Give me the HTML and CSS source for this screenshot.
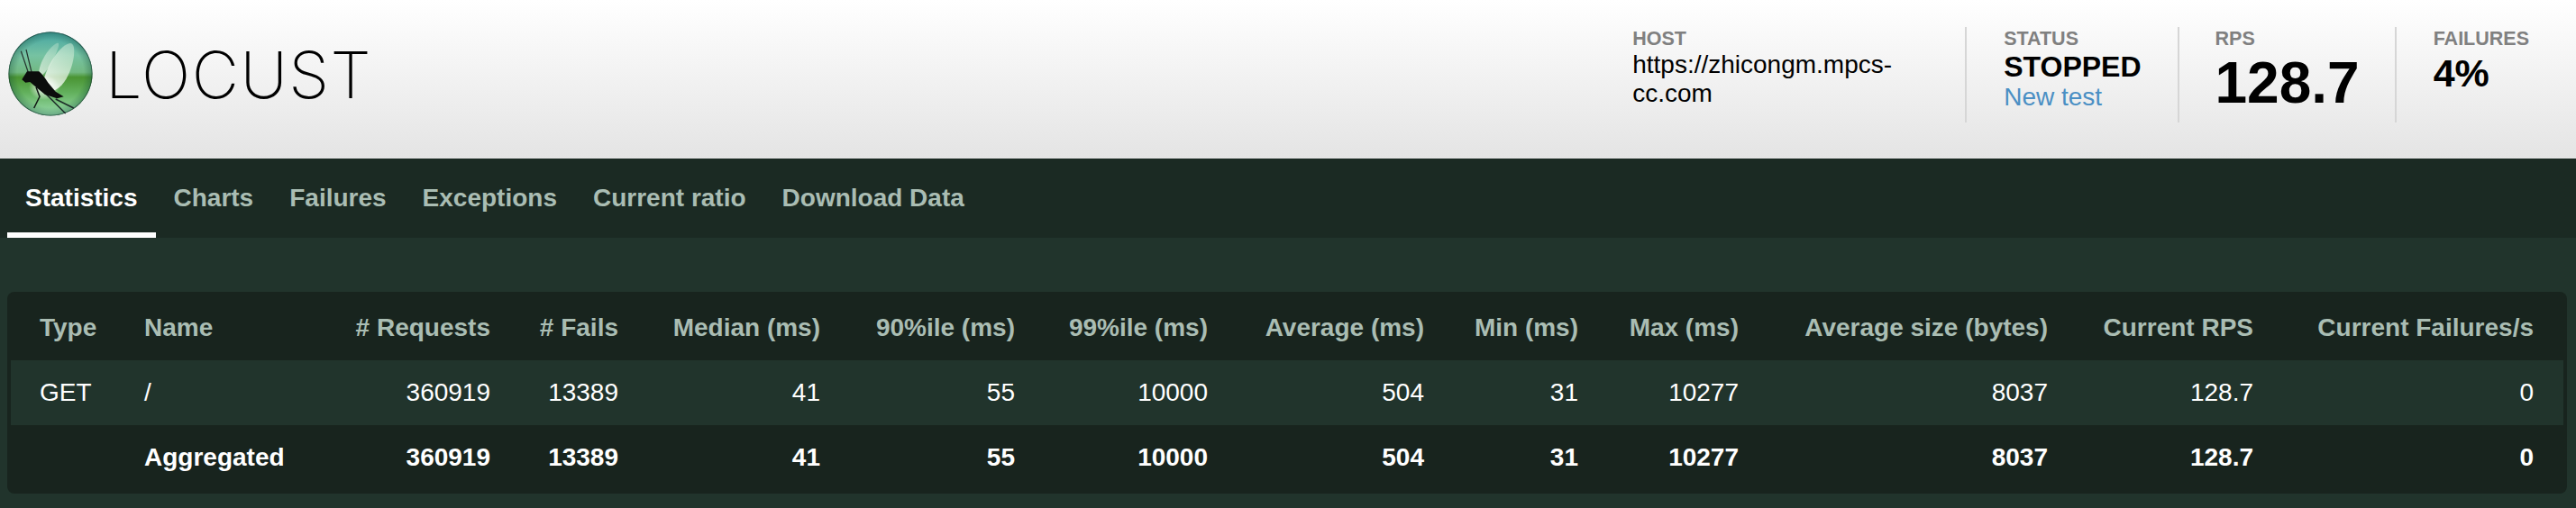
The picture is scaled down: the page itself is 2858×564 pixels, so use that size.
FILE: index.html
```html
<!DOCTYPE html>
<html>
	<head>
		<meta charset="utf-8" />
		<title>Locust</title>
		<link rel="stylesheet" href="styles.css">
	</head>
	<body>
		<div class="top">
			<div class="brand">
				<svg class="logo" viewBox="0 0 94 94" width="94" height="94">
					<defs>
						<linearGradient id="ball" x1="0" y1="0" x2="0" y2="1">
							<stop offset="0" stop-color="#45a5a3"/>
							<stop offset="0.28" stop-color="#76c2a2"/>
							<stop offset="0.48" stop-color="#72b982"/>
							<stop offset="0.54" stop-color="#4a9433"/>
							<stop offset="0.72" stop-color="#62b05c"/>
							<stop offset="1" stop-color="#9adcae"/>
						</linearGradient>
						<radialGradient id="rim" cx="0.5" cy="0.5" r="0.5">
							<stop offset="0.8" stop-color="#0f4a3a" stop-opacity="0"/>
							<stop offset="0.97" stop-color="#0f4a3a" stop-opacity="0.3"/>
							<stop offset="1" stop-color="#0b2a24" stop-opacity="0.9"/>
						</radialGradient>
						<radialGradient id="glow" cx="0.5" cy="0.5" r="0.5">
							<stop offset="0" stop-color="#fff"/>
							<stop offset="0.4" stop-color="#fff" stop-opacity="0.65"/>
							<stop offset="1" stop-color="#fff" stop-opacity="0"/>
						</radialGradient>
						<linearGradient id="wing" x1="0.2" y1="1" x2="0.7" y2="0">
							<stop offset="0" stop-color="#fff" stop-opacity="0.9"/>
							<stop offset="1" stop-color="#e0f3de" stop-opacity="0.45"/>
						</linearGradient>
					</defs>
					<circle cx="47" cy="47" r="46.5" fill="url(#ball)"/>
					<circle cx="47" cy="47" r="46.5" fill="url(#rim)"/>
					<path d="M34 52C32 38 44 18 54 13C58 11 56 18 52 27C48 36 42 46 34 52Z" fill="url(#wing)" opacity="0.7"/>
					<path d="M38 60C42 38 58 14 69 13C75 13 74 28 70 40C66 52 60 62 50 66C45 67 40 65 38 60Z" fill="url(#wing)"/>
					<ellipse cx="40" cy="62" rx="17" ry="14" fill="url(#glow)"/>
					<path d="M14.3 21.7L23.3 48.3M20 20L26 45" stroke="#25332e" stroke-width="1.2" fill="none"/>
					<path d="M31 61.7L35 72.3L28.7 85" stroke="#101513" stroke-width="1.5" fill="none"/>
					<path d="M41 68.3L63.7 91M52.7 75L72.7 85" stroke="#1c2b28" stroke-width="1.5" fill="none"/>
					<path d="M15.3 53.3L21 44.3L34.3 44.3C38 47 41 52 44.3 56.7L52.7 66.7L61.7 72.3L54.3 74.3L41 70L31 61.7L24.3 56L19.3 56.7Z" fill="#0b0d0c"/>
				</svg>
				<span class="wordmark">LOCUST</span>
			</div>
			<div class="stats">
				<div class="stat stat-host">
					<div class="label">HOST</div>
					<div class="host">https://zhicongm.mpcs-cc.com</div>
				</div>
				<div class="stat stat-status">
					<div class="label">STATUS</div>
					<div class="state">STOPPED</div>
					<a class="newtest" href="#">New test</a>
				</div>
				<div class="stat stat-rps">
					<div class="label">RPS</div>
					<div class="rps">128.7</div>
				</div>
				<div class="stat stat-last">
					<div class="label">FAILURES</div>
					<div class="fails">4%</div>
				</div>
			</div>
		</div>
		<ul class="tabs">
			<li class="tab active">Statistics</li>
			<li class="tab">Charts</li>
			<li class="tab">Failures</li>
			<li class="tab">Exceptions</li>
			<li class="tab">Current ratio</li>
			<li class="tab">Download Data</li>
		</ul>
		<div class="main">
			<div class="panel">
				<table class="stats-table">
					<colgroup>
						<col class="c-type"><col class="c-name"><col class="c-req"><col class="c-fails">
						<col class="c-med"><col class="c-90"><col class="c-99"><col class="c-avg">
						<col class="c-min"><col class="c-max"><col class="c-size"><col class="c-rps"><col class="c-fs">
					</colgroup>
					<thead>
						<tr>
							<th class="left">Type</th>
							<th class="left">Name</th>
							<th># Requests</th>
							<th># Fails</th>
							<th>Median (ms)</th>
							<th>90%ile (ms)</th>
							<th>99%ile (ms)</th>
							<th>Average (ms)</th>
							<th>Min (ms)</th>
							<th>Max (ms)</th>
							<th>Average size (bytes)</th>
							<th>Current RPS</th>
							<th>Current Failures/s</th>
						</tr>
					</thead>
					<tbody>
						<tr class="row">
							<td class="left">GET</td>
							<td class="left">/</td>
							<td>360919</td>
							<td>13389</td>
							<td>41</td>
							<td>55</td>
							<td>10000</td>
							<td>504</td>
							<td>31</td>
							<td>10277</td>
							<td>8037</td>
							<td>128.7</td>
							<td>0</td>
						</tr>
						<tr class="total">
							<td class="left"></td>
							<td class="left">Aggregated</td>
							<td>360919</td>
							<td>13389</td>
							<td>41</td>
							<td>55</td>
							<td>10000</td>
							<td>504</td>
							<td>31</td>
							<td>10277</td>
							<td>8037</td>
							<td>128.7</td>
							<td>0</td>
						</tr>
					</tbody>
				</table>
			</div>
		</div>
	</body>
</html>
```

FILE: styles.css
```css
html,body
{
	margin: 0;
	padding: 0;
}

body
{
	background-color: #21342C;
	color: #FFF;
	font-family: "Liberation Sans",Arial,sans-serif;
	overflow: hidden;
}

.top
{
	align-items: flex-start;
	background: linear-gradient(#FFF,#E4E4E4);
	box-sizing: border-box;
	color: #000;
	display: flex;
	height: 176px;
	justify-content: space-between;
	padding: 30px 11px 0 9px;
}

.brand
{
	align-items: center;
	display: flex;
	height: 94px;
	margin-top: 5px;
}

.logo
{
	display: block;
}

.wordmark
{
	font-family: Inter,sans-serif;
	font-size: 72px;
	font-weight: 200;
	letter-spacing: 1.5px;
	margin-left: 14px;
}

.stats
{
	display: flex;
}

.stat
{
	border-right: 2px solid #D6D6D6;
	height: 106px;
	padding: 0 41px;
}

.stat-host
{
	width: 328px;
}

.stat-status
{
	padding-right: 40px;
}

.stat-rps
{
	padding: 0 39px 0 40px;
}

.stat-last
{
	border-right: 0;
}

.label
{
	color: #808080;
	font-size: 21.5px;
	font-weight: bold;
	line-height: 26px;
}

.host
{
	font-size: 28px;
	line-height: 32px;
}

.state
{
	font-size: 32px;
	font-weight: bold;
	line-height: 36px;
}

.newtest
{
	color: #4A8FC4;
	display: block;
	font-size: 28px;
	line-height: 32px;
	text-decoration: none;
}

.rps
{
	font-size: 64px;
	font-weight: bold;
	line-height: 72px;
}

.fails
{
	font-size: 43px;
	font-weight: bold;
	line-height: 50px;
}

.tabs
{
	background-color: #1B2A23;
	box-sizing: border-box;
	display: flex;
	font-size: 28px;
	font-weight: bold;
	height: 88px;
	list-style: none;
	margin: 0;
	padding: 0 0 0 8px;
}

.tab
{
	box-sizing: border-box;
	color: #AABDB3;
	height: 88px;
	line-height: 88px;
	padding: 0 20px;
}

.active
{
	border-bottom: 6px solid #FFF;
	color: #FFF;
}

.main
{
	padding: 60px 10px 16px 8px;
}

.panel
{
	background-color: #18241E;
	border-radius: 8px;
	padding: 4px;
}

.stats-table
{
	border-collapse: collapse;
	font-size: 28px;
	table-layout: fixed;
	width: 2832px;
}

.stats-table th,
.stats-table td
{
	box-sizing: border-box;
	height: 72px;
	padding: 0 16px;
	text-align: right;
	white-space: nowrap;
}

.stats-table th
{
	color: #AABDB3;
}

.stats-table .left
{
	text-align: left;
}

.stats-table th:first-child,
.stats-table td:first-child
{
	padding-left: 32px;
}

.stats-table th:last-child,
.stats-table td:last-child
{
	padding-right: 33px;
}

.row
{
	background-color: #21342C;
}

.total td
{
	font-weight: bold;
}

.c-type { width: 132px; }
.c-name { width: 216px; }
.c-req { width: 200px; }
.c-fails { width: 142px; }
.c-med { width: 224px; }
.c-90 { width: 216px; }
.c-99 { width: 214px; }
.c-avg { width: 240px; }
.c-min { width: 171px; }
.c-max { width: 178px; }
.c-size { width: 343px; }
.c-rps { width: 228px; }
.c-fs { width: 328px; }
```
